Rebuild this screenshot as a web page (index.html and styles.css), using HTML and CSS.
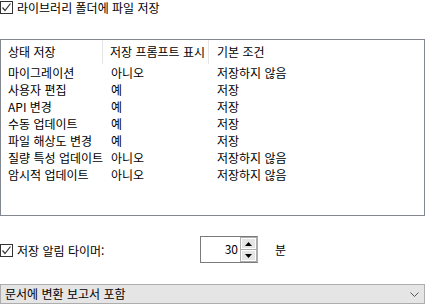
FILE: index.html
```html
<!DOCTYPE html>
<html lang="ko">
<head>
<meta charset="UTF-8" />
<title>저장 옵션</title>
<link rel="stylesheet" href="styles.css">
</head>
<body>
  <div class="panel">
    <label class="check-row top">
      <span class="checkbox checked">
        <svg viewBox="0 0 13 13" width="13" height="13"><path d="M2.5 6.5 L5 9.5 L10.5 2.5" fill="none" stroke="#333" stroke-width="1.2"/></svg>
      </span>
      <span class="check-label">라이브러리 폴더에 파일 저장</span>
    </label>

    <div class="list">
      <div class="row head">
        <div class="cell c1">상태 저장</div>
        <div class="cell c2">저장 프롬프트 표시</div>
        <div class="cell c3">기본 조건</div>
      </div>
      <div class="row"><div class="cell c1">마이그레이션</div><div class="cell c2">아니오</div><div class="cell c3">저장하지 않음</div></div>
      <div class="row"><div class="cell c1">사용자 편집</div><div class="cell c2">예</div><div class="cell c3">저장</div></div>
      <div class="row"><div class="cell c1">API 변경</div><div class="cell c2">예</div><div class="cell c3">저장</div></div>
      <div class="row"><div class="cell c1">수동 업데이트</div><div class="cell c2">예</div><div class="cell c3">저장</div></div>
      <div class="row"><div class="cell c1">파일 해상도 변경</div><div class="cell c2">예</div><div class="cell c3">저장</div></div>
      <div class="row"><div class="cell c1">질량 특성 업데이트</div><div class="cell c2">아니오</div><div class="cell c3">저장하지 않음</div></div>
      <div class="row"><div class="cell c1">암시적 업데이트</div><div class="cell c2">아니오</div><div class="cell c3">저장하지 않음</div></div>
    </div>

    <div class="timer-row">
      <label class="check-row timer-check">
        <span class="checkbox checked">
          <svg viewBox="0 0 13 13" width="13" height="13"><path d="M2.5 6.5 L5 9.5 L10.5 2.5" fill="none" stroke="#333" stroke-width="1.2"/></svg>
        </span>
        <span class="check-label">저장 알림 타이머:</span>
      </label>
      <div class="spin">
        <div class="spin-value">30</div>
        <div class="spin-buttons">
          <div class="spin-btn"><svg viewBox="0 0 7 4" width="7" height="4"><path d="M0 4 L3.5 0 L7 4 Z" fill="#000"/></svg></div>
          <div class="spin-btn"><svg viewBox="0 0 7 4" width="7" height="4"><path d="M0 0 L7 0 L3.5 4 Z" fill="#000"/></svg></div>
        </div>
      </div>
      <span class="unit">분</span>
    </div>

    <div class="combo">
      <span class="combo-text">문서에 변환 보고서 포함</span>
      <svg class="chevron" viewBox="0 0 9 5" width="9" height="5"><path d="M0.5 0.5 L4.5 4.5 L8.5 0.5" fill="none" stroke="#555" stroke-width="1"/></svg>
    </div>
  </div>
</body>
</html>
```

FILE: styles.css
```css
* {
  box-sizing: border-box;
}
body {
  margin: 0;
  background: #fff;
  font-family: "Noto Sans CJK KR", "Noto Sans", sans-serif;
  font-size: 12px;
  color: #000;
}
.panel {
  width: 425px;
  display: flex;
  flex-direction: column;
}
.check-row {
  display: flex;
  align-items: center;
  gap: 4px;
}
.check-row.top {
  height: 15px;
}
.checkbox {
  width: 13px;
  height: 13px;
  border: 1px solid #333;
  background: #fff;
  display: flex;
  align-items: center;
  justify-content: center;
  flex: none;
}
.checkbox svg {
  margin: -1px;
}
.check-label {
  line-height: 15px;
}
.list {
  margin-top: 24px;
  height: 177px;
  border: 1px solid #828790;
  background: #fff;
}
.row {
  display: flex;
  height: 17px;
  line-height: 17px;
  white-space: nowrap;
}
.row.head {
  height: 24px;
  line-height: 24px;
}
.cell {
  overflow: hidden;
}
.c1 {
  width: 102px;
  padding-left: 7px;
}
.c2 {
  width: 106px;
  padding-left: 8px;
}
.c3 {
  flex: 1;
  padding-left: 8px;
}
.head .c1,
.head .c2 {
  border-right: 1px solid #e5e5e5;
}
.head .c2 {
  padding-left: 7px;
}
.timer-row {
  margin-top: 20px;
  height: 27px;
  display: flex;
  align-items: center;
}
.timer-check {
  width: 200px;
  margin-top: 2px;
}
.spin {
  width: 58px;
  height: 27px;
  display: flex;
  border: 1px solid #7a7a7a;
  border-right-color: #adadad;
}
.spin-value {
  flex: 1;
  text-align: right;
  padding-right: 2px;
  line-height: 24px;
}
.spin-buttons {
  width: 17px;
  display: flex;
  flex-direction: column;
  gap: 1px;
  border-left: 1px solid #adadad;
  background: #adadad;
  padding: 1px;
  padding-left: 0;
}
.spin-btn {
  flex: 1;
  background: #e5e5e5;
  border: 1px solid #fff;
  display: flex;
  align-items: center;
  justify-content: center;
}
.unit {
  margin-left: 17px;
}
.combo {
  margin-top: 21px;
  height: 20px;
  border: 1px solid #adadad;
  background: #e5e5e5;
  display: flex;
  align-items: center;
  justify-content: space-between;
  padding: 0 5px 0 4px;
}
.combo-text {
  line-height: 18px;
}
```
